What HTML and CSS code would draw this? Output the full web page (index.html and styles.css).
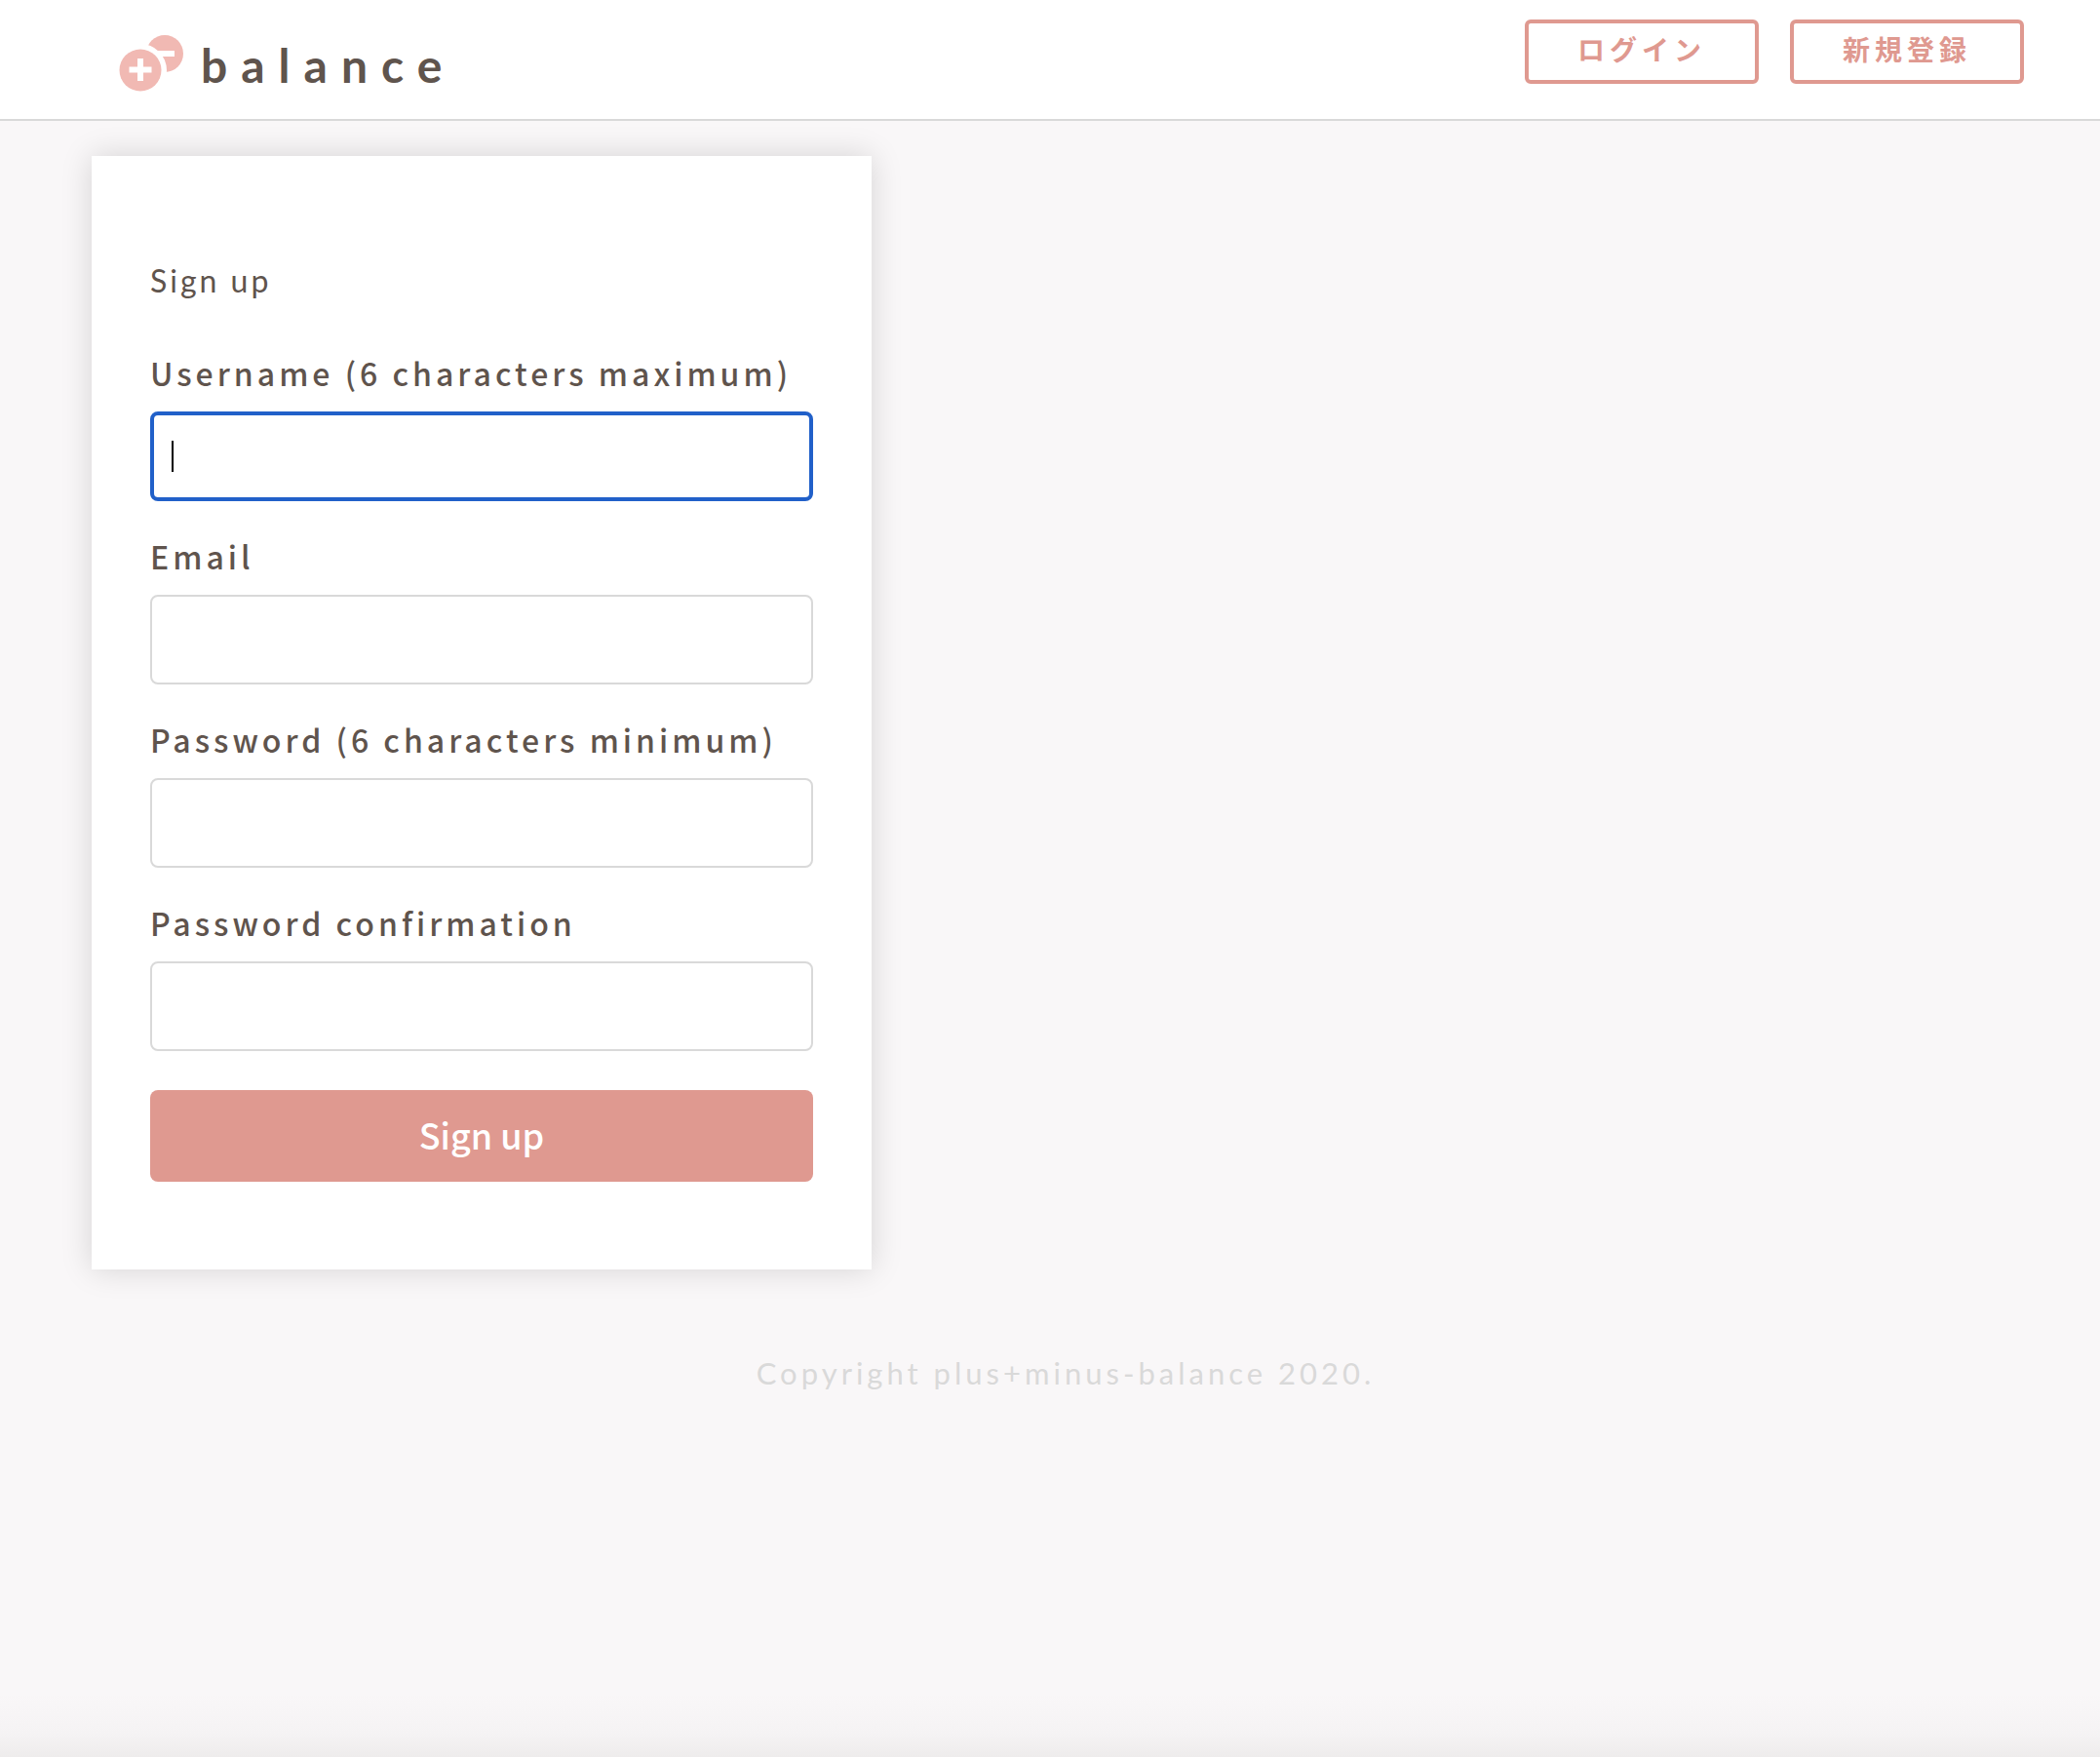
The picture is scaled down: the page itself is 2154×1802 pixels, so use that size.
FILE: index.html
```html
<!DOCTYPE html>
<html lang="ja">
<head>
  <meta charset="utf-8">
  <meta name="viewport" content="width=device-width, initial-scale=1">
  <title>balance</title>
  <link rel="stylesheet" href="styles.css">
</head>
<body>
  <header class="header">
    <a class="logo" href="#">
      <svg class="logo-mark" viewBox="0 0 66 58" aria-hidden="true">
        <mask id="cut">
          <rect width="66" height="58" fill="#fff"/>
          <circle cx="22" cy="36" r="27" fill="#000"/>
          <rect x="36" y="16" width="21" height="6" fill="#000"/>
        </mask>
        <circle cx="47" cy="19" r="19" fill="#f1b9b3" mask="url(#cut)"/>
        <circle cx="22" cy="36" r="21.5" fill="#f1b9b3"/>
        <path d="M22 24v23M10.500 35.500h23" stroke="#fff" stroke-width="6" fill="none"/>
      </svg>
      <span class="logo-text">balance</span>
    </a>
    <nav class="nav">
      <a class="nav-link" href="#">ログイン</a>
      <a class="nav-link" href="#">新規登録</a>
    </nav>
  </header>

  <main class="main">
    <form class="card">
      <h1 class="title">Sign up</h1>
      <div class="field field-active">
        <label class="label" for="username">Username (6 characters maximum)</label>
        <input class="input" id="username" type="text" autofocus>
      </div>
      <div class="field">
        <label class="label" for="email">Email</label>
        <input class="input" id="email" type="email">
      </div>
      <div class="field">
        <label class="label" for="password">Password (6 characters minimum)</label>
        <input class="input" id="password" type="password">
      </div>
      <div class="field">
        <label class="label" for="confirmation">Password confirmation</label>
        <input class="input" id="confirmation" type="password">
      </div>
      <button class="submit" type="submit">Sign up</button>
    </form>
  </main>

  <footer class="footer">Copyright plus+minus-balance 2020.</footer>
</body>
</html>
```

FILE: styles.css
```css
* {
  box-sizing: border-box;
}

body {
  display: flex;
  flex-direction: column;
  min-height: 100vh;
  margin: 0;
  color: #5f544d;
  background: linear-gradient(to top, #eeecec, #f5f3f4 24px, #f9f7f8 64px);
  font-family: "Noto Sans CJK JP", sans-serif;
}

.header {
  display: flex;
  justify-content: space-between;
  align-items: flex-start;
  padding: 20px 78px 24px 122px;
  border-bottom: 2px solid #d9d9d9;
  background: #fff;
}

.logo {
  display: flex;
  gap: 18px;
  margin-top: 16px;
  color: inherit;
  text-decoration: none;
}

.logo-mark {
  width: 66px;
  height: 58px;
}

.logo-text {
  font: 700 48px/62px Lato, sans-serif;
  letter-spacing: 14px;
}

.nav {
  display: flex;
  gap: 32px;
}

.nav-link {
  width: 240px;
  height: 66px;
  border: 4px solid #df9990;
  border-radius: 6px;
  color: #df9990;
  font-size: 28px;
  font-weight: 700;
  line-height: 52px;
  letter-spacing: 5px;
  text-align: center;
  text-decoration: none;
}

.main {
  padding: 36px 94px;
}

.card {
  max-width: 800px;
  padding: 104px 60px 90px;
  background: #fff;
  box-shadow: 0 0 30px rgba(0, 0, 0, 0.15);
}

.title {
  margin: 0 0 46px;
  font: 400 32px/48px Lato, sans-serif;
  letter-spacing: 3px;
}

.field {
  display: flex;
  flex-direction: column;
  gap: 16px;
  margin-bottom: 32px;
}

.label {
  font-size: 32px;
  font-weight: 500;
  line-height: 48px;
  letter-spacing: 4px;
  white-space: nowrap;
}

.input {
  width: 100%;
  height: 92px;
  padding: 0 20px;
  border: 2px solid #d9d9d9;
  border-radius: 8px;
  outline: 0;
  color: #000;
  background: #fff;
  caret-color: transparent;
  font: 32px/32px "Liberation Sans", sans-serif;
}

.input:focus {
  padding: 0 18px;
  border: 4px solid #2160c9;
}

/* Steady text cursor over the focused field */
.field-active {
  position: relative;
}

.field-active:focus-within::after {
  content: "";
  position: absolute;
  bottom: 30px;
  left: 22px;
  width: 2px;
  height: 32px;
  background: #000;
}

.submit {
  width: 100%;
  height: 94px;
  margin-top: 8px;
  padding: 0 0 4px;
  border: 0;
  border-radius: 8px;
  color: #fff;
  background: #df9990;
  font: 500 36px/48px "Noto Sans CJK JP", sans-serif;
}

.footer {
  padding: 46px 0 48px 32px;
  color: #d9d9d9;
  font: 31px/48px Lato, sans-serif;
  letter-spacing: 4px;
  text-align: center;
}
```
